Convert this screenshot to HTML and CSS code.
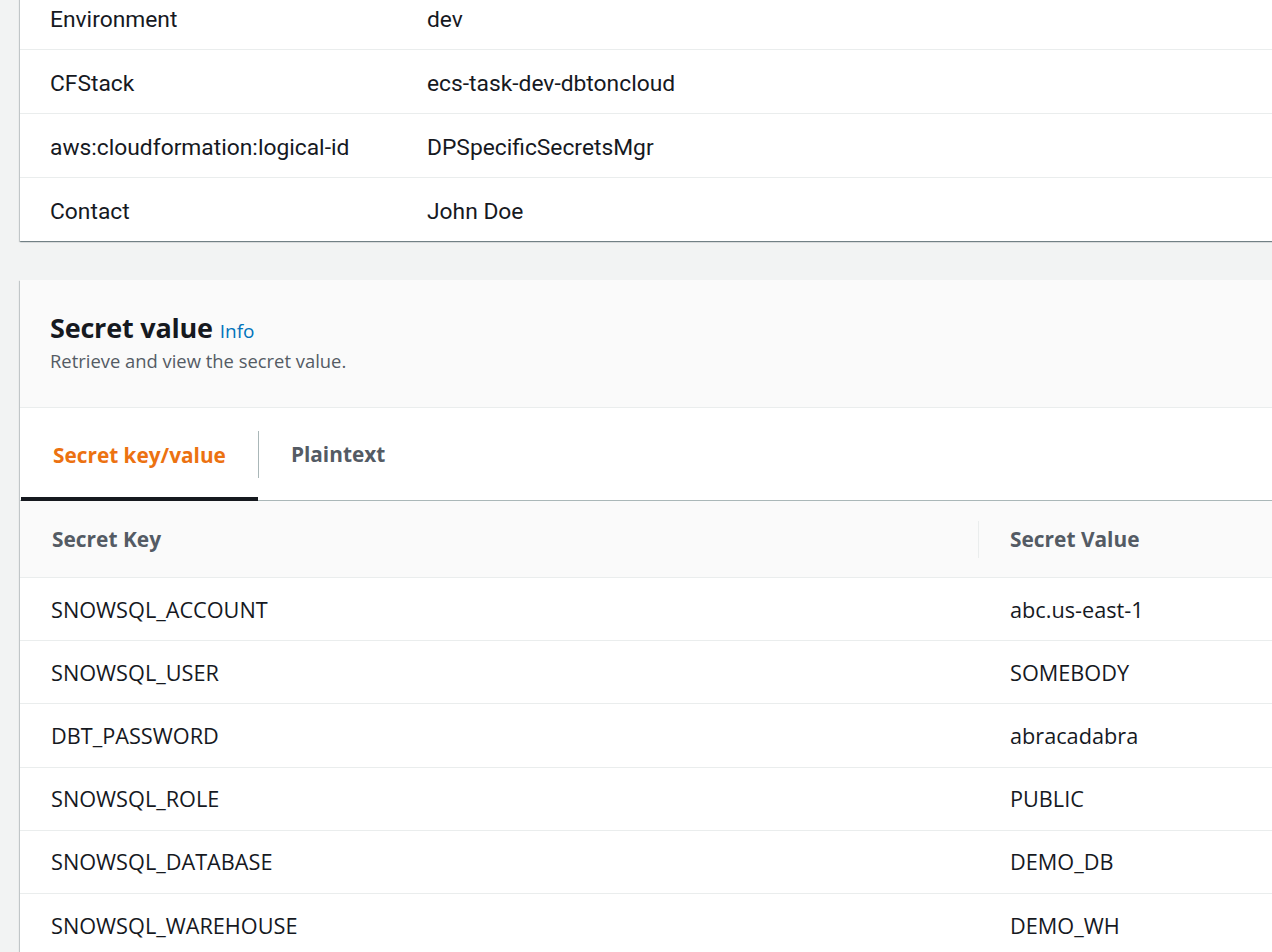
FILE: index.html
```html
<!DOCTYPE html>
<html>
<head>
<meta charset="utf-8">
<link rel="stylesheet" href="styles.css">
</head>
<body>
<div class="page">
  <section class="card tags">
    <div class="kv-row"><div class="k">Environment</div><div class="v">dev</div></div>
    <div class="kv-row"><div class="k">CFStack</div><div class="v">ecs-task-dev-dbtoncloud</div></div>
    <div class="kv-row"><div class="k">aws:cloudformation:logical-id</div><div class="v">DPSpecificSecretsMgr</div></div>
    <div class="kv-row last"><div class="k">Contact</div><div class="v">John Doe</div></div>
  </section>

  <section class="card secret">
    <header class="card-head">
      <h2 class="title">Secret value <a class="info">Info</a></h2>
      <p class="desc">Retrieve and view the secret value.</p>
    </header>
    <nav class="tabs">
      <div class="tab active">Secret key/value</div>
      <div class="tab-sep"></div>
      <div class="tab">Plaintext</div>
    </nav>
    <div class="table">
      <div class="thead">
        <div class="th c1">Secret Key</div>
        <div class="th c2">Secret Value</div>
      </div>
      <div class="tr"><div class="td c1">SNOWSQL_ACCOUNT</div><div class="td c2">abc.us-east-1</div></div>
      <div class="tr"><div class="td c1">SNOWSQL_USER</div><div class="td c2">SOMEBODY</div></div>
      <div class="tr"><div class="td c1">DBT_PASSWORD</div><div class="td c2">abracadabra</div></div>
      <div class="tr"><div class="td c1">SNOWSQL_ROLE</div><div class="td c2">PUBLIC</div></div>
      <div class="tr"><div class="td c1">SNOWSQL_DATABASE</div><div class="td c2">DEMO_DB</div></div>
      <div class="tr"><div class="td c1">SNOWSQL_WAREHOUSE</div><div class="td c2">DEMO_WH</div></div>
    </div>
  </section>
</div>
</body>
</html>
```
FILE: styles.css
```css
html, body {
  margin: 0;
  padding: 0;
  background: #f2f3f3;
  overflow: hidden;
  height: 952px;
}
.page {
  padding-left: 20px;
  margin-right: -60px;
  font-family: "Open Sans", "Noto Sans", sans-serif;
  color: #16191f;
}
.card {
  background: #ffffff;
  box-shadow: 0 1px 1px 0 rgba(0, 28, 36, 0.35), 1px 1px 1px 0 rgba(0, 28, 36, 0.15), -1px 1px 1px 0 rgba(0, 28, 36, 0.15);
}
.tags {
  margin-top: -14px;
}
.kv-row {
  display: flex;
  align-items: center;
  height: 63px;
  padding-top: 3px;
  box-sizing: border-box;
  border-bottom: 1px solid #eaeded;
  font-family: "Roboto", sans-serif;
  font-size: 22.8px;
}
.kv-row:not(.last) {
  height: 64px;
}
.kv-row.last {
  border-bottom: none;
  height: 63px;
}
.k {
  width: 407px;
  padding-left: 30px;
  box-sizing: border-box;
}
.v {
  flex: 1;
}
.secret {
  margin-top: 39px;
}
.card-head {
  background: #fafafa;
  height: 128px;
  box-sizing: border-box;
  padding: 30px 30px 0 30px;
  border-bottom: 1px solid #eaeded;
}
.title {
  margin: 0;
  font-size: 27px;
  font-weight: 700;
  line-height: 36px;
  letter-spacing: -0.2px;
}
.info {
  font-size: 19px;
  font-weight: 400;
  color: #0073bb;
  letter-spacing: 0;
}
.desc {
  margin: -1px 0 0 0;
  font-size: 18.4px;
  line-height: 26px;
  color: #545b64;
}
.tabs {
  display: flex;
  align-items: center;
  height: 93px;
  border-bottom: 1px solid #aab7b8;
  box-sizing: border-box;
}
.tab {
  height: 100%;
  display: flex;
  align-items: center;
  padding: 0 32px;
  font-size: 20.8px;
  font-weight: 700;
  color: #545b64;
  box-sizing: border-box;
}
.tab.active {
  color: #ec7211;
  border-bottom: 4px solid #16191f;
  padding-top: 4px;
  margin-left: 1px;
  margin-bottom: -1px;
  height: calc(100% + 1px);
}
.tab-sep {
  width: 1px;
  height: 47px;
  background: #aab7b8;
}
.thead {
  display: flex;
  align-items: center;
  height: 77px;
  background: #fafafa;
  border-bottom: 1px solid #eaeded;
  box-sizing: border-box;
}
.th {
  font-size: 20.9px;
  font-weight: 700;
  color: #545b64;
}
.c1 {
  width: 959px;
  padding-left: 32px;
  box-sizing: border-box;
}
.th.c1 {
  border-right: 1px solid #eaeded;
  height: 37px;
  display: flex;
  align-items: center;
}
.c2 {
  padding-left: 31px;
}
.td.c1 {
  padding-left: 31px;
}
.tr {
  display: flex;
  align-items: center;
  height: 63.2px;
  border-bottom: 1px solid #eaeded;
  box-sizing: border-box;
  font-size: 21.7px;
}
```
